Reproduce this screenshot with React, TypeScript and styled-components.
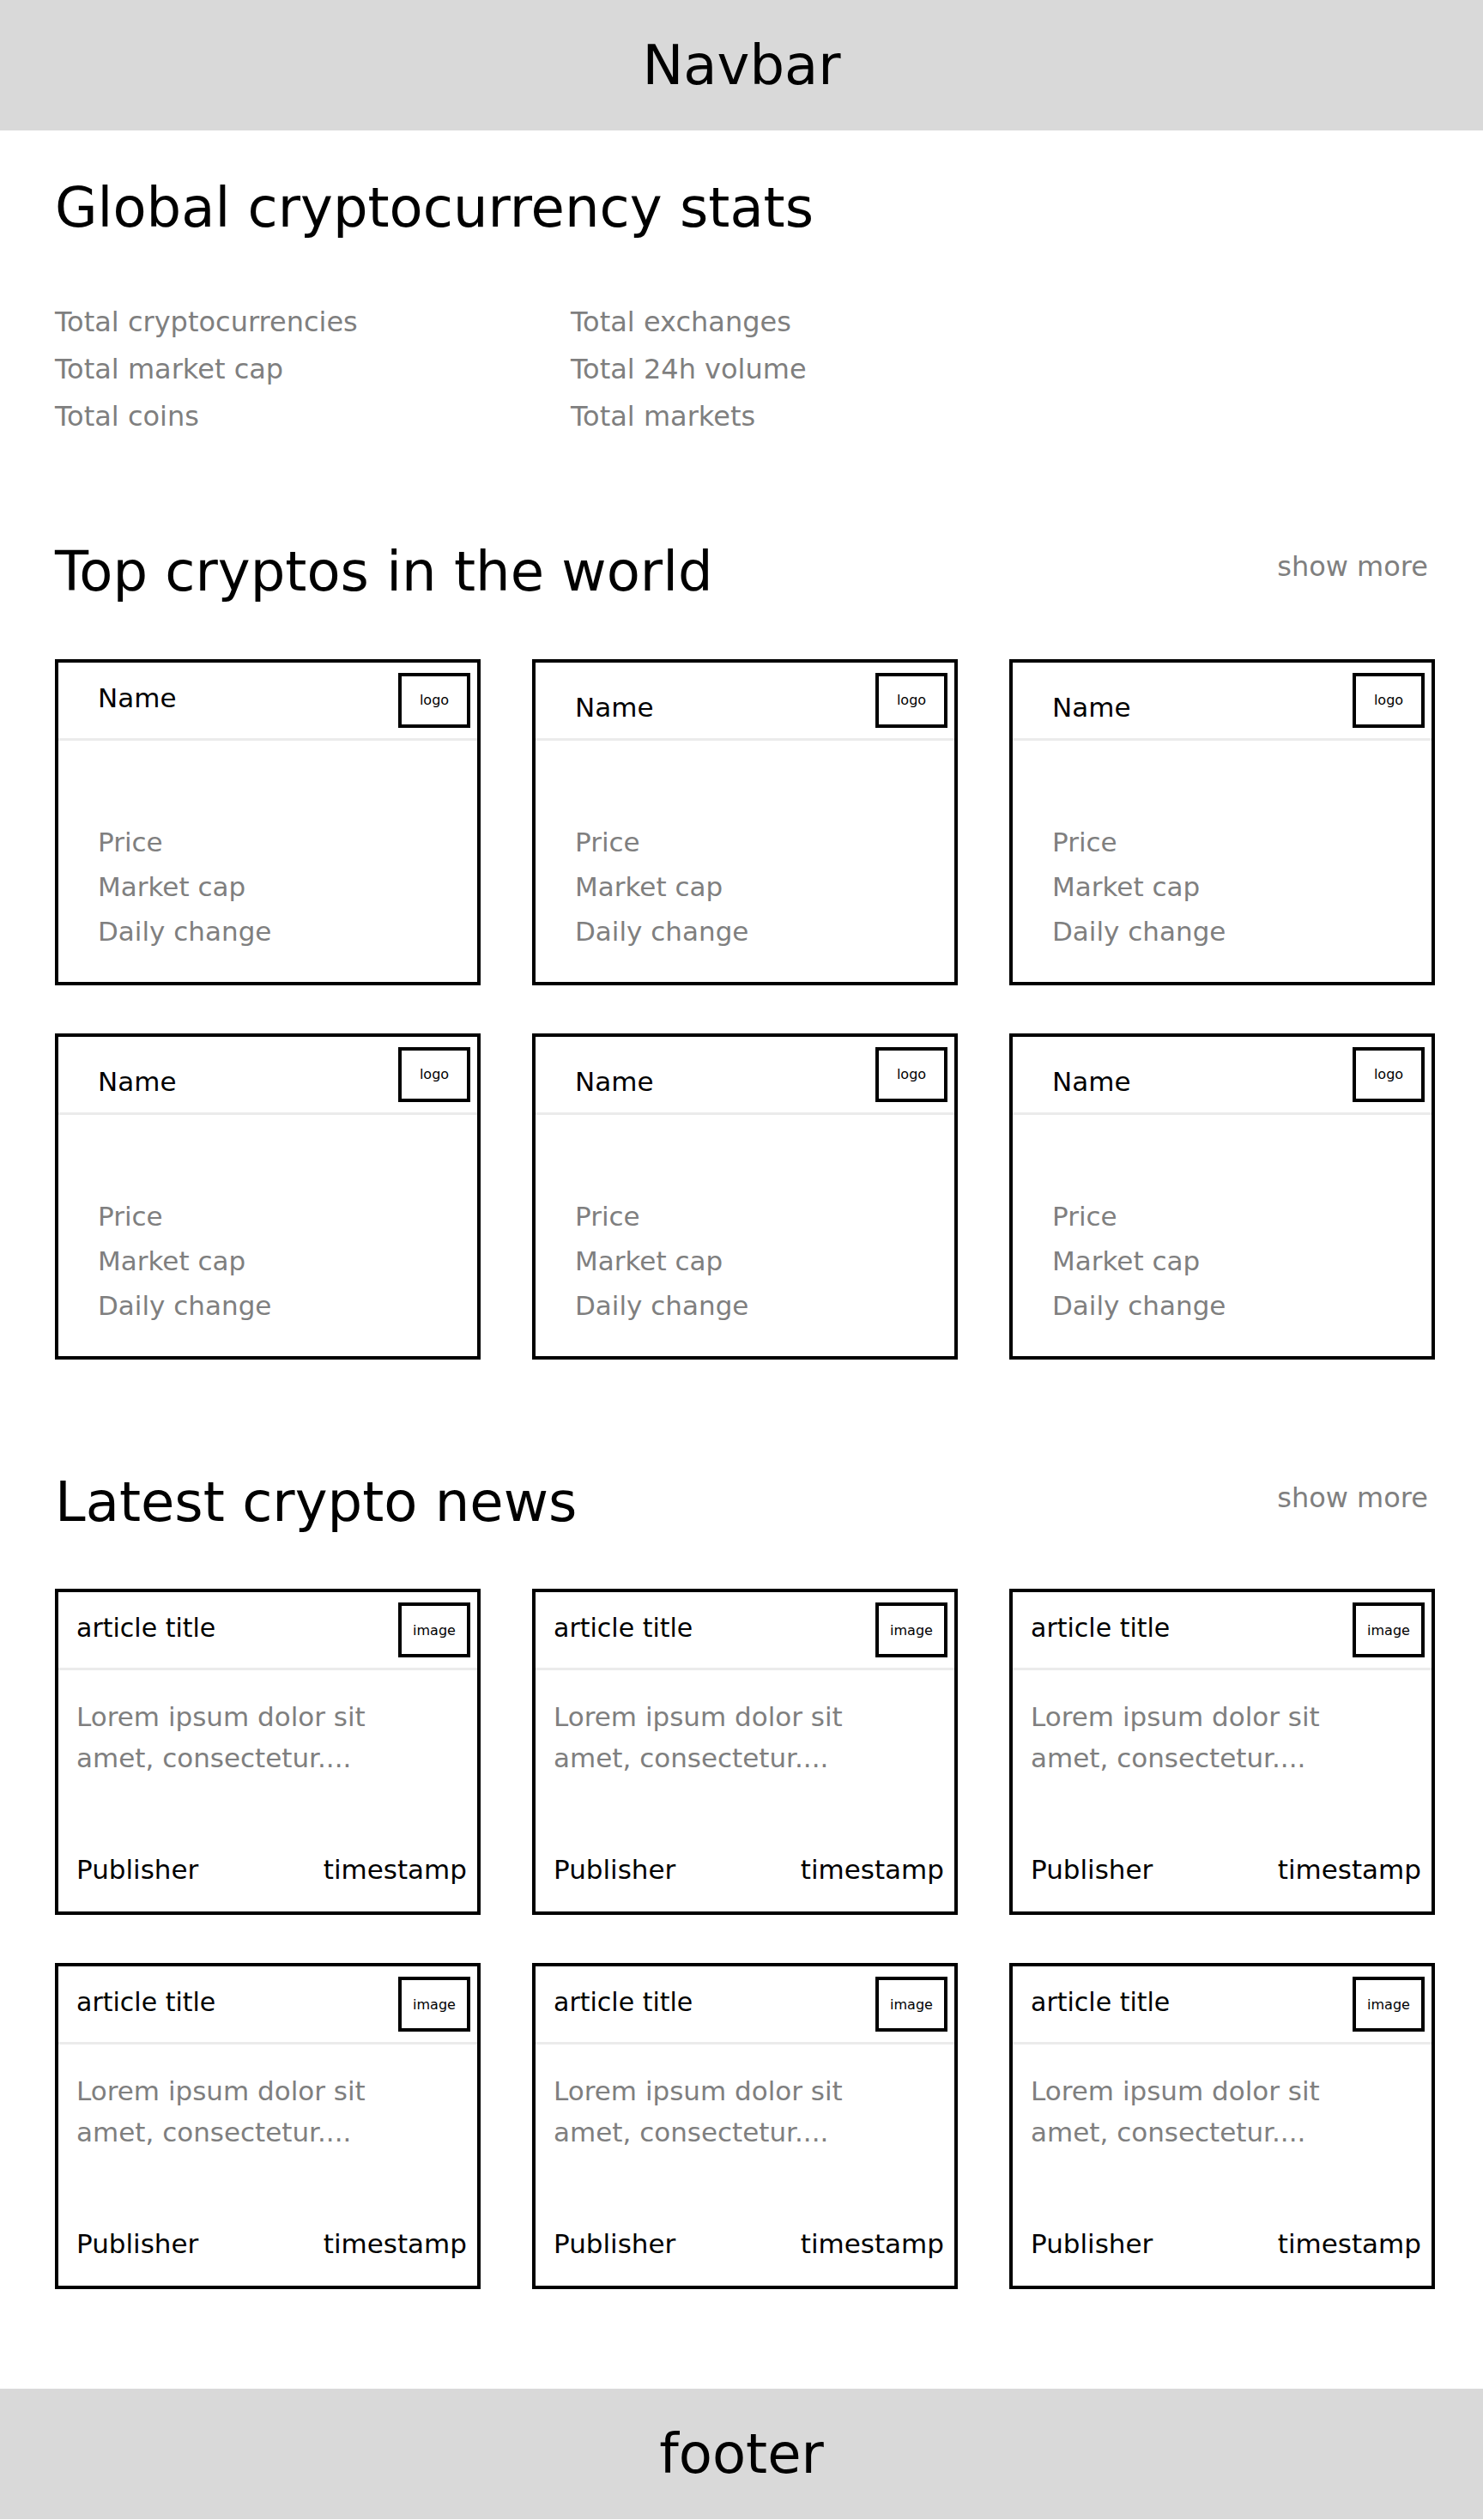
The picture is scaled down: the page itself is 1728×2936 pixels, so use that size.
import React from "react";
import styled, { createGlobalStyle } from "styled-components";

const GlobalStyle = createGlobalStyle`
  * {
    box-sizing: border-box;
  }

  body {
    margin: 0;
    background: #ffffff;
    color: #000000;
    font-family: "DejaVu Sans", "Liberation Sans", sans-serif;
  }
`;

interface Coin {
  id: number;
  raised?: boolean;
}

interface Article {
  id: number;
}

const coins: Coin[] = [
  { id: 1, raised: true },
  { id: 2 },
  { id: 3 },
  { id: 4 },
  { id: 5 },
  { id: 6 },
];

const articles: Article[] = [
  { id: 1 },
  { id: 2 },
  { id: 3 },
  { id: 4 },
  { id: 5 },
  { id: 6 },
];

const Bar = styled.div`
  height: 152px;
  display: flex;
  align-items: center;
  justify-content: center;
  background: #d9d9d9;
  font-size: 64px;
  line-height: 1.2;
`;

const Main = styled.main`
  padding: 52px 56px 116px 64px;
`;

const Section = styled.section<{ $gap: number }>`
  margin-top: ${(p) => p.$gap}px;
`;

const Heading = styled.h1`
  margin: 0;
  font-size: 64px;
  font-weight: 400;
  line-height: 1.2;
`;

const StatsGrid = styled.div`
  display: grid;
  grid-template-columns: 601px 1fr;
  margin-top: 67px;
`;

const StatsColumn = styled.div`
  display: flex;
  flex-direction: column;
`;

const StatLine = styled.span`
  font-size: 32px;
  line-height: 55px;
  color: #7f7f7f;
`;

const SectionHeader = styled.div<{ $linkOffset: number }>`
  display: flex;
  justify-content: space-between;
  align-items: flex-start;
  margin-bottom: 63px;

  a {
    margin-top: ${(p) => p.$linkOffset}px;
  }
`;

const ShowMore = styled.a`
  padding-right: 8px;
  font-size: 32px;
  line-height: 1.2;
  color: #7f7f7f;
  text-decoration: none;
  cursor: pointer;
`;

const CardGrid = styled.div`
  display: grid;
  grid-template-columns: repeat(3, 496px);
  grid-auto-rows: 380px;
  gap: 56px 60px;
`;

const Card = styled.article`
  display: flex;
  flex-direction: column;
  border: 4px solid #000000;
  background: #ffffff;
`;

const CardHead = styled.div`
  display: flex;
  justify-content: space-between;
  align-items: flex-start;
  flex-shrink: 0;
  height: 91px;
  border-bottom: 3px solid #ebebeb;
`;

const CardTitle = styled.h3<{ $top: number; $indent: number; $size: number }>`
  margin: ${(p) => p.$top}px 0 0;
  padding-left: ${(p) => p.$indent}px;
  font-size: ${(p) => p.$size}px;
  font-weight: 400;
  line-height: 1.2;
`;

const Thumb = styled.div`
  display: flex;
  align-items: center;
  justify-content: center;
  width: 84px;
  height: 64px;
  margin: 12px 8px 0 0;
  border: 4px solid #000000;
  font-size: 16px;
`;

const CoinBody = styled.div`
  display: flex;
  flex-direction: column;
  padding: 92px 0 0 46px;
`;

const CoinStat = styled.span`
  font-size: 31px;
  line-height: 52px;
  color: #7f7f7f;
`;

const Summary = styled.p`
  max-width: 381px;
  margin: 0;
  padding: 30px 0 0 21px;
  font-size: 31px;
  line-height: 48px;
  color: #7f7f7f;
`;

const CardFoot = styled.div`
  display: flex;
  justify-content: space-between;
  margin-top: auto;
  padding: 0 12px 30px 21px;
  font-size: 31px;
  line-height: 1.2;
`;

function CoinCard({ coin }: { coin: Coin }) {
  return (
    <Card>
      <CardHead>
        <CardTitle $top={coin.raised ? 23 : 34} $indent={46} $size={31}>
          Name
        </CardTitle>
        <Thumb>logo</Thumb>
      </CardHead>
      <CoinBody>
        <CoinStat>Price</CoinStat>
        <CoinStat>Market cap</CoinStat>
        <CoinStat>Daily change</CoinStat>
      </CoinBody>
    </Card>
  );
}

function NewsCard() {
  return (
    <Card>
      <CardHead>
        <CardTitle $top={24} $indent={21} $size={30}>
          article title
        </CardTitle>
        <Thumb>image</Thumb>
      </CardHead>
      <Summary>Lorem ipsum dolor sit amet, consectetur....</Summary>
      <CardFoot>
        <span>Publisher</span>
        <span>timestamp</span>
      </CardFoot>
    </Card>
  );
}

export default function App() {
  return (
    <>
      <GlobalStyle />
      <Bar as="nav">Navbar</Bar>

      <Main>
        <section>
          <Heading>Global cryptocurrency stats</Heading>
          <StatsGrid>
            <StatsColumn>
              <StatLine>Total cryptocurrencies</StatLine>
              <StatLine>Total market cap</StatLine>
              <StatLine>Total coins</StatLine>
            </StatsColumn>
            <StatsColumn>
              <StatLine>Total exchanges</StatLine>
              <StatLine>Total 24h volume</StatLine>
              <StatLine>Total markets</StatLine>
            </StatsColumn>
          </StatsGrid>
        </section>

        <Section $gap={115}>
          <SectionHeader $linkOffset={13}>
            <Heading>Top cryptos in the world</Heading>
            <ShowMore>show more</ShowMore>
          </SectionHeader>
          <CardGrid>
            {coins.map((coin) => (
              <CoinCard key={coin.id} coin={coin} />
            ))}
          </CardGrid>
        </Section>

        <Section $gap={128}>
          <SectionHeader $linkOffset={14}>
            <Heading>Latest crypto news</Heading>
            <ShowMore>show more</ShowMore>
          </SectionHeader>
          <CardGrid>
            {articles.map((article) => (
              <NewsCard key={article.id} />
            ))}
          </CardGrid>
        </Section>
      </Main>

      <Bar as="footer">footer</Bar>
    </>
  );
}
